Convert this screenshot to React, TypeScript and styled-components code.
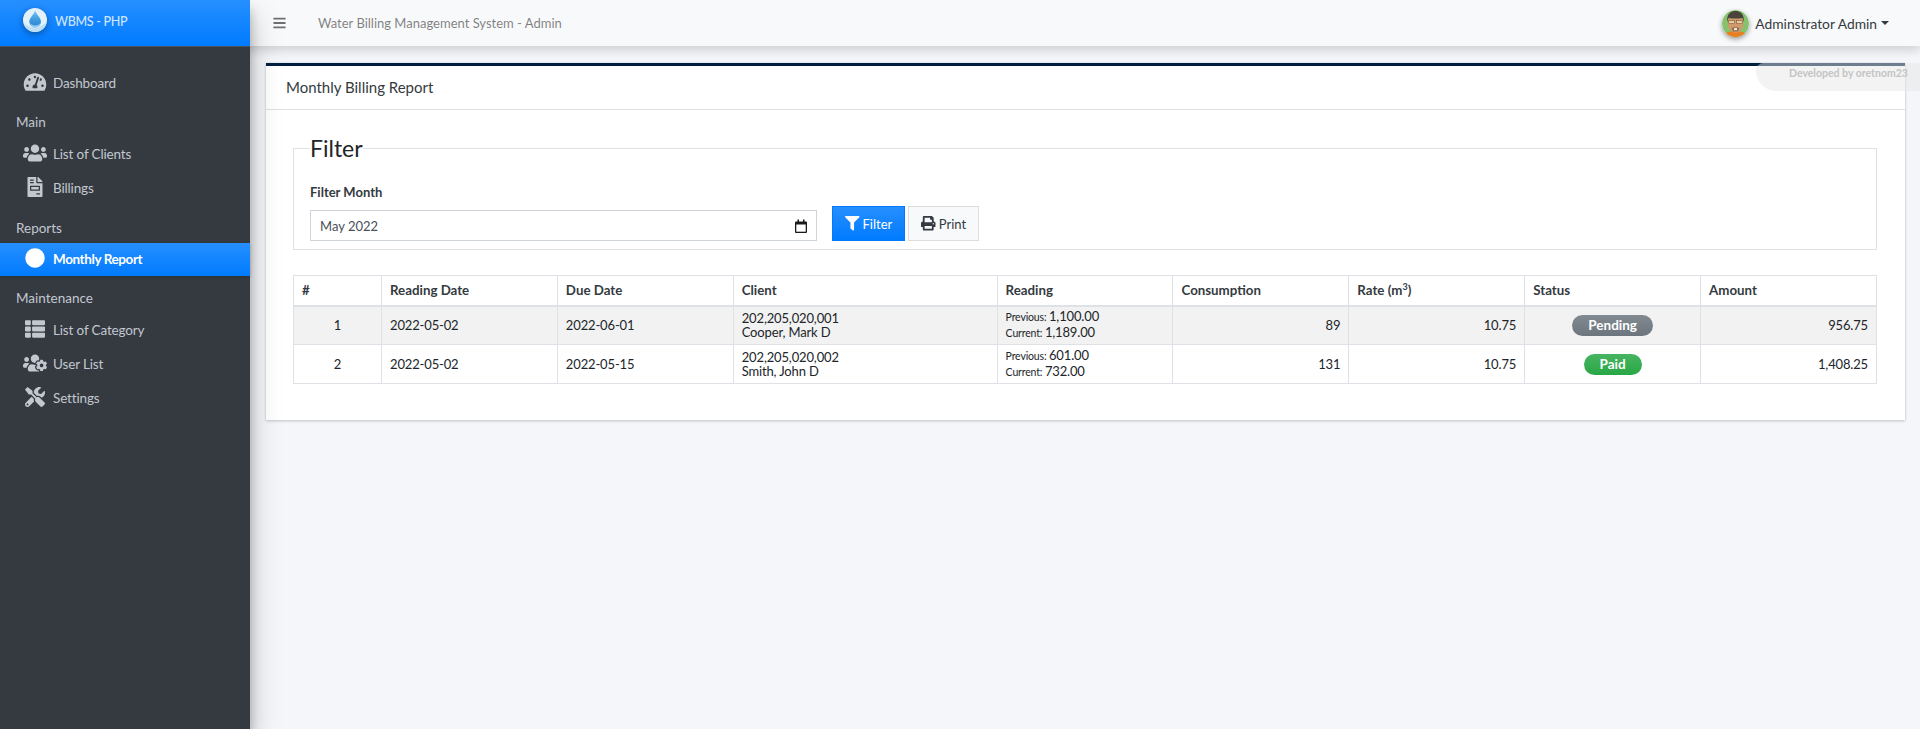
import { createGlobalStyle, styled } from "styled-components";
import { ReactNode } from "react";
import { FaBars, FaCircle, FaFileInvoice, FaFilter, FaPrint, FaTachometerAlt, FaThList, FaTools, FaUsers, FaUsersCog } from "react-icons/fa";

const FONT = `"Lato", "Noto Sans", sans-serif`;

const GlobalStyle = createGlobalStyle`
  * { box-sizing: border-box; }
  html, body { margin: 0; height: 100%; }
  body {
    font-family: ${FONT};
    font-size: 13.5px;
    color: #343a40;
    background: #f4f6f9;
  }
`;

const Page = styled.div`
  display: flex;
  min-height: 729px;
  overflow: hidden;
`;

const Sidebar = styled.aside`
  width: 250px;
  flex-shrink: 0;
  background: #343a40;
  box-shadow: 0 14px 28px rgba(0,0,0,.25), 0 10px 10px rgba(0,0,0,.22);
  z-index: 3;
`;

const Brand = styled.div`
  height: 47px;
  display: flex;
  align-items: center;
  gap: 8px;
  padding: 0 0 3px 23px;
  background: linear-gradient(180deg, #268fff, #007bff);
  border-bottom: 1px solid #4b545c;
  color: rgba(255,255,255,.8);
  font-size: 12.5px;
  letter-spacing: -.3px;
  font-weight: 500;

  svg {
    margin-top: -4px;
  }
`;

const Nav = styled.nav`
  display: flex;
  flex-direction: column;
  padding-top: 19px;
`;

const NavHeader = styled.div`
  height: 22px;
  line-height: 22px;
  margin: 11.4px 0 4px;
  padding-left: 16px;
  font-size: 13.5px;
  color: #c2c7d0;
`;

const NavItem = styled.a<{ $active?: boolean }>`
  height: ${(p) => (p.$active ? "33px" : "34px")};
  display: flex;
  align-items: center;
  gap: 6px;
  padding-left: 23px;
  font-size: 13.5px;
  letter-spacing: ${(p) => (p.$active ? "-.4px" : "-.15px")};
  color: ${(p) => (p.$active ? "#fff" : "#c2c7d0")};
  font-weight: ${(p) => (p.$active ? 700 : 400)};
  background: ${(p) => (p.$active ? "linear-gradient(180deg, #268fff, #007bff)" : "transparent")};
  box-shadow: ${(p) => (p.$active ? "0 1px 3px rgba(0,0,0,.2)" : "none")};

  svg {
    width: 24px;
    height: 20px;
    flex-shrink: 0;
    margin-top: -3px;
  }
`;

const Main = styled.div`
  flex: 1;
  min-width: 0;
  display: flex;
  flex-direction: column;
`;

const Topbar = styled.header`
  height: 46px;
  display: flex;
  align-items: center;
  padding: 0 16px 0 273px;
  margin-left: -250px;
  background: #f8f9fa;
  box-shadow: 0 4px 10px rgba(0,0,0,.16);
  position: relative;
  z-index: 2;
  color: rgba(0,0,0,.5);
  font-size: 13px;

  svg.bars {
    width: 13px;
    height: 14px;
    margin-right: 32px;
    color: rgba(0,0,0,.55);
  }
`;

const UserMenu = styled.div`
  margin-left: auto;
  margin-right: 15px;
  display: flex;
  align-items: center;
  gap: 6px;
  color: #343a40;
  font-size: 13.8px;

  svg.avatar {
    border-radius: 50%;
    box-shadow: 0 2px 5px rgba(0,0,0,.4);
  }
`;

const Caret = styled.span`
  width: 0;
  height: 0;
  margin-left: -2px;
  border-top: 4px solid #343a40;
  border-left: 4px solid transparent;
  border-right: 4px solid transparent;
`;

const Content = styled.main`
  padding: 17px 15px 0 16px;
`;

const Card = styled.section`
  position: relative;
  background: #fff;
  border-top: 3px solid #001f3f;
  box-shadow: 0 0 1px rgba(0,0,0,.125), 0 1px 3px rgba(0,0,0,.2);
`;

const Credit = styled.div`
  position: absolute;
  top: -3px;
  right: -15px;
  width: 164px;
  height: 28px;
  padding: 4px 0 0 33px;
  border-radius: 8px 0 0 22px;
  background: rgba(229,229,229,.48);
  color: #c4c4c4;
  font-size: 10.5px;
  font-weight: 700;
  line-height: 13px;
  white-space: nowrap;
`;

const CardHeader = styled.div`
  height: 44px;
  display: flex;
  align-items: center;
  padding: 0 0 2px 20px;
  border-bottom: 1px solid #dee2e6;
  font-size: 15px;
  color: #343a40;
`;

const CardBody = styled.div`
  padding: 26px 28px 36px 27px;
`;

const FilterBox = styled.fieldset`
  margin: 0 0 25px;
  padding: 0 16px;
  height: 114px;
  border: 1px solid #dee2e6;
`;

const Legend = styled.legend`
  padding: 0;
  font-size: 23px;
  line-height: 24px;
  color: #212529;
`;

const FilterRow = styled.div`
  display: flex;
  align-items: flex-end;
  gap: 15px;
  margin-top: 24px;
`;

const Field = styled.div`
  width: 507px;
`;

const FieldLabel = styled.label`
  display: block;
  margin-bottom: 10px;
  font-weight: 700;
  font-size: 13px;
  color: #343a40;
`;

const DateBox = styled.div`
  height: 31px;
  display: flex;
  align-items: center;
  justify-content: space-between;
  padding: 0 9px;
  border: 1px solid #ced4da;
  background: #fff;
  color: #495057;
  font-size: 13px;
`;

const Buttons = styled.div`
  display: flex;
  gap: 3px;
`;

const Button = styled.button<{ $primary?: boolean }>`
  height: 35px;
  display: flex;
  align-items: center;
  gap: 3px;
  padding: 0 12px;
  font-family: ${FONT};
  font-size: 13px;
  border: 1px solid ${(p) => (p.$primary ? "#007bff" : "#ddd")};
  background: ${(p) => (p.$primary ? "linear-gradient(180deg, #268fff, #007bff)" : "#f8f9fa")};
  color: ${(p) => (p.$primary ? "#fff" : "#343a40")};

  svg {
    width: 14.5px;
    height: 14.5px;
  }
`;

const Table = styled.table`
  width: 100%;
  table-layout: fixed;
  border-collapse: collapse;
  font-size: 13px;
  color: #212529;

  th, td {
    border: 1px solid #dee2e6;
    padding: 0 8px;
    font-size: 13px;
  }
  th {
    height: 30px;
    text-align: left;
    font-size: 13.3px;
    font-weight: 700;
    color: #343a40;
    border-bottom-width: 2px;
  }
  th sup {
    font-size: 9px;
    line-height: 0;
  }
  td {
    height: 39px;
    line-height: 14px;
    letter-spacing: -.15px;
  }
  tbody tr:nth-child(odd) { background: #f2f2f2; }
`;

const Cell = styled.td<{ $align?: string }>`
  text-align: ${(p) => p.$align || "left"};
`;

const Reading = styled.div`
  line-height: 15px;
  small { font-size: 10.5px; }
`;

const Badge = styled.span<{ $color: string }>`
  display: inline-block;
  vertical-align: middle;
  padding: 0 16px;
  height: 21px;
  line-height: 21px;
  border-radius: 10.5px;
  font-size: 13.5px;
  font-weight: 700;
  letter-spacing: 0;
  color: #fff;
  background: ${(p) => p.$color};
`;

const Logo = () => (
  <svg width="24" height="24" viewBox="0 0 24 24" style={{ filter: "drop-shadow(0 2px 3px rgba(0,0,0,.35))" }}>
    <defs>
      <linearGradient id="logoDrop" x1="0" y1="0" x2="0" y2="1">
        <stop offset="0" stopColor="#7cc2ee" />
        <stop offset=".55" stopColor="#3f9be0" />
        <stop offset="1" stopColor="#2b86cf" />
      </linearGradient>
    </defs>
    <circle cx="12" cy="12" r="12" fill="#e3f1fb" />
    <path d="M0.4 15 C6 19 12 21.5 17 18.5 C20 16.5 22 15.5 23.6 15 A12 12 0 0 1 0.4 15Z" fill="#bcdff5" />
    <path d="M12.2 2.5 C13 6 18 9.5 18 14 A5.9 5.9 0 0 1 6.3 14 C6.3 9.5 11.4 6 12.2 2.5Z" fill="url(#logoDrop)" />
    <path d="M7.2 15 C9 18 14 18.3 17.4 15.6 C16.4 18.5 14.2 19.8 12 19.8 C9.8 19.8 8 18 7.2 15Z" fill="#8fcbf0" />
  </svg>
);

const Avatar = () => (
  <svg className="avatar" width="27" height="27" viewBox="0 0 27 27">
    <circle cx="13.5" cy="13.5" r="13.5" fill="#84c26c" />
    <path d="M3.5 23 C7 20.5 20 20.5 23.5 23 A13.5 13.5 0 0 1 3.5 23Z" fill="#e8801f" />
    <ellipse cx="13.5" cy="13.5" rx="8" ry="9.2" fill="#cf9a6c" />
    <path d="M5.2 12 C4.5 3.5 9 1 13.5 1 C18 1 22.5 3.5 21.8 12 L20.5 8 C15 9 11 8.6 6.5 8Z" fill="#4a443c" />
    <rect x="6.8" y="10.6" width="5.6" height="3" fill="#e4cba8" stroke="#7a4a28" strokeWidth=".5" />
    <rect x="14.6" y="10.6" width="5.6" height="3" fill="#e4cba8" stroke="#7a4a28" strokeWidth=".5" />
    <path d="M9.5 18 C11.5 17 15.5 17 17.5 18 L16 21.5 H11Z" fill="#8f6e54" />
    <rect x="12" y="18" width="3" height="2.2" fill="#ece3d7" />
  </svg>
);

const CalendarIcon = () => (
  <svg width="12" height="14" viewBox="0 0 12 14">
    <path d="M1 2.5h10a1 1 0 0 1 1 1V13a1 1 0 0 1-1 1H1a1 1 0 0 1-1-1V3.5a1 1 0 0 1 1-1Z" fill="#1a1a1a" />
    <rect x="2.5" y="0.5" width="1.5" height="3" fill="#1a1a1a" />
    <rect x="8" y="0.5" width="1.5" height="3" fill="#1a1a1a" />
    <rect x="1.3" y="5.5" width="9.4" height="7.2" fill="#fff" />
  </svg>
);

const Nums = ({ prev, curr }: { prev: string; curr: string }) => (
  <Reading>
    <div><small>Previous: </small>{prev}</div>
    <div><small>Current: </small>{curr}</div>
  </Reading>
);

const rows: { id: number; reading: string; due: string; code: string; name: string; prev: string; curr: string; cons: string; badge: ReactNode; amount: string }[] = [
  { id: 1, reading: "2022-05-02", due: "2022-06-01", code: "202,205,020,001", name: "Cooper, Mark D", prev: "1,100.00", curr: "1,189.00", cons: "89", badge: <Badge $color="linear-gradient(180deg, #828a91, #6c757d)">Pending</Badge>, amount: "956.75" },
  { id: 2, reading: "2022-05-02", due: "2022-05-15", code: "202,205,020,002", name: "Smith, John D", prev: "601.00", curr: "732.00", cons: "131", badge: <Badge $color="linear-gradient(180deg, #48b461, #28a745)">Paid</Badge>, amount: "1,408.25" },
];

export default function App() {
  return (
    <>
      <GlobalStyle />
      <Page>
        <Sidebar>
          <Brand><Logo />WBMS - PHP</Brand>
          <Nav>
            <NavItem><FaTachometerAlt />Dashboard</NavItem>
            <NavHeader>Main</NavHeader>
            <NavItem><FaUsers />List of Clients</NavItem>
            <NavItem><FaFileInvoice />Billings</NavItem>
            <NavHeader>Reports</NavHeader>
            <NavItem $active><FaCircle />Monthly Report</NavItem>
            <NavHeader>Maintenance</NavHeader>
            <NavItem><FaThList />List of Category</NavItem>
            <NavItem><FaUsersCog />User List</NavItem>
            <NavItem><FaTools />Settings</NavItem>
          </Nav>
        </Sidebar>
        <Main>
          <Topbar>
            <FaBars className="bars" />
            Water Billing Management System - Admin
            <UserMenu><Avatar />Adminstrator Admin<Caret /></UserMenu>
          </Topbar>
          <Content>
            <Card>
              <Credit>Developed by oretnom23</Credit>
              <CardHeader>Monthly Billing Report</CardHeader>
              <CardBody>
                <FilterBox>
                  <Legend>Filter</Legend>
                  <FilterRow>
                    <Field>
                      <FieldLabel>Filter Month</FieldLabel>
                      <DateBox>May 2022<CalendarIcon /></DateBox>
                    </Field>
                    <Buttons>
                      <Button $primary><FaFilter />Filter</Button>
                      <Button><FaPrint />Print</Button>
                    </Buttons>
                  </FilterRow>
                </FilterBox>
                <Table>
                  <colgroup>
                    <col style={{ width: "5.56%" }} />
                    <col style={{ width: "11.11%" }} />
                    <col style={{ width: "11.11%" }} />
                    <col style={{ width: "16.67%" }} />
                    <col style={{ width: "11.11%" }} />
                    <col style={{ width: "11.11%" }} />
                    <col style={{ width: "11.11%" }} />
                    <col style={{ width: "11.11%" }} />
                    <col style={{ width: "11.11%" }} />
                  </colgroup>
                  <thead>
                    <tr>
                      <th>#</th>
                      <th>Reading Date</th>
                      <th>Due Date</th>
                      <th>Client</th>
                      <th>Reading</th>
                      <th>Consumption</th>
                      <th>Rate (m<sup>3</sup>)</th>
                      <th>Status</th>
                      <th>Amount</th>
                    </tr>
                  </thead>
                  <tbody>
                    {rows.map((r) => (
                      <tr key={r.id}>
                        <Cell $align="center">{r.id}</Cell>
                        <Cell>{r.reading}</Cell>
                        <Cell>{r.due}</Cell>
                        <Cell>{r.code}<br />{r.name}</Cell>
                        <Cell><Nums prev={r.prev} curr={r.curr} /></Cell>
                        <Cell $align="right">{r.cons}</Cell>
                        <Cell $align="right">10.75</Cell>
                        <Cell $align="center">{r.badge}</Cell>
                        <Cell $align="right">{r.amount}</Cell>
                      </tr>
                    ))}
                  </tbody>
                </Table>
              </CardBody>
            </Card>
          </Content>
        </Main>
      </Page>
    </>
  );
}
